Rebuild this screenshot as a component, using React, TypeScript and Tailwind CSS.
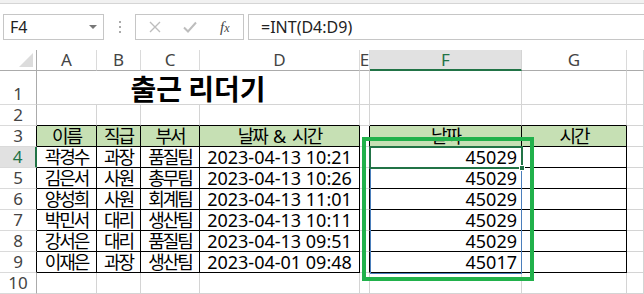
import clsx from "clsx";

const COLS = ["A", "B", "C", "D", "E", "F", "G", ""];

const DATA: string[][] = [
	["곽경수", "과장", "품질팀", "2023-04-13 10:21", "45029"],
	["김은서", "사원", "총무팀", "2023-04-13 10:26", "45029"],
	["양성희", "사원", "회계팀", "2023-04-13 11:01", "45029"],
	["박민서", "대리", "생산팀", "2023-04-13 10:11", "45029"],
	["강서은", "대리", "품질팀", "2023-04-13 09:51", "45029"],
	["이재은", "과장", "생산팀", "2023-04-01 09:48", "45017"],
];

const HEADS = ["이름", "직급", "부서", "", "", "날짜", "시간", ""];

function inTable(r: number, c: number) {
	return r >= 3 && r <= 9 && (c <= 3 || c === 5 || c === 6);
}

function cellText(r: number, c: number): string {
	if (r === 3) return HEADS[c];
	if (r >= 4 && r <= 9) {
		const row = DATA[r - 4];
		if (c <= 3) return row[c];
		if (c === 5) return row[4];
	}
	return "";
}

function Cell({ r, c }: { r: number; c: number }) {
	const text = cellText(r, c);
	const right = c === 5 && r >= 4;
	const korean = r === 3 || c <= 2;
	return (
		<div
			className={clsx(
				"flex items-end border-r border-b pb-[1px] text-[18px] leading-[18px] text-black whitespace-nowrap",
				inTable(r, c) || inTable(r, c + 1) ? "border-r-black" : "border-r-[#d4d4d4]",
				inTable(r, c) || inTable(r + 1, c) ? "border-b-black" : "border-b-[#d4d4d4]",
				r === 3 && inTable(r, c) && "bg-[#c6e0b4]",
				right ? "justify-end pr-[4px]" : "justify-center",
				korean && "tracking-[-2px]",
			)}
		>
			{r === 3 && c === 3 ? (
				<>
					<span>날짜</span>
					<span className="mx-[6px] tracking-normal">&amp;</span>
					<span>시간</span>
				</>
			) : (
				text
			)}
		</div>
	);
}

function RowHead({ r }: { r: number }) {
	const active = r === 4;
	return (
		<div
			className={clsx(
				"flex items-end justify-center border-b border-b-[#dadada] pb-[1px] text-[17px] leading-[18px]",
				active ? "bg-[#e1e1e1] text-[#217346] border-r-2 border-r-[#217346]" : "text-[#444] border-r",
				!active && (inTable(r, 0) ? "border-r-black" : "border-r-[#ababab]"),
			)}
		>
			{r}
		</div>
	);
}

function Toolbar() {
	return (
		<div className="h-[50px] flex flex-col">
			<div className="h-[4px] bg-[#f1f1f1] border-b border-[#d5d5d5]" />
			<div className="mt-[10px] flex h-[26px] items-stretch">
				<div className="ml-[3px] w-[101px] border border-[#c6c6c6] flex items-center justify-between pl-[6px] pr-[6px]">
					<span className="text-[16px] text-[#222]">F4</span>
					<span className="w-0 h-0 border-l-[4px] border-r-[4px] border-t-[4px] border-l-transparent border-r-transparent border-t-[#777]" />
				</div>
				<div className="w-[31px] flex flex-col items-center justify-center gap-[3px]">
					<span className="w-[2px] h-[2px] bg-[#aaa]" />
					<span className="w-[2px] h-[2px] bg-[#aaa]" />
					<span className="w-[2px] h-[2px] bg-[#aaa]" />
				</div>
				<div className="w-[109px] border border-[#c6c6c6] flex items-center">
					<svg width="12" height="12" viewBox="0 0 12 12" className="ml-[13px]">
						<path d="M1 1L11 11M11 1L1 11" stroke="#bdbdbd" strokeWidth="1.4" fill="none" />
					</svg>
					<svg width="14" height="12" viewBox="0 0 14 12" className="ml-[22px]">
						<path d="M1 6.5L5 10.5L13 1.5" stroke="#bdbdbd" strokeWidth="2" fill="none" />
					</svg>
					<span className="ml-[23px] font-['Liberation_Serif',serif] italic text-[15px] text-[#444]">
						f<span className="text-[12px]">x</span>
					</span>
				</div>
				<div className="ml-[4px] flex-1 border border-r-0 border-[#c6c6c6] flex items-center pl-[12px]">
					<span className="text-[16px] text-[#222]">=INT(D4:D9)</span>
				</div>
			</div>
		</div>
	);
}

export default function App() {
	const rows = [2, 3, 4, 5, 6, 7, 8, 9, 10];
	return (
		<div className="relative w-[644px] h-[294px] overflow-hidden bg-white font-['Noto_Sans','Noto_Sans_CJK_KR',sans-serif]">
			<Toolbar />
			<div className="grid grid-cols-[37px_60px_44px_59px_160px_10px_152px_105px_1fr] grid-rows-[21px_34px_21px_21px_21px_21px_21px_21px_21px_21px_21px]">
				<div className="relative border-r border-b border-[#ababab]">
					<div className="absolute right-[3px] bottom-[3px] w-[14px] h-[14px] bg-[#dcdcdc] [clip-path:polygon(100%_0,100%_100%,0_100%)]" />
				</div>
				{COLS.map((col, i) =>
					col === "F" ? (
						<div
							key={i}
							className="flex items-center justify-center bg-[#e1e1e1] border-r border-r-[#d4d4d4] border-b-2 border-b-[#217346] text-[17px] text-[#217346]"
						>
							{col}
						</div>
					) : (
						<div
							key={i}
							className="flex items-center justify-center border-r border-r-[#dadada] border-b border-b-[#ababab] text-[17px] text-[#444]"
						>
							{col}
						</div>
					),
				)}

				<RowHead r={1} />
				<div className="col-span-4 flex items-end justify-center border-r border-b border-[#d4d4d4] pb-[1px] font-['Noto_Sans_CJK_KR',sans-serif] font-bold text-[28px] leading-[29px] text-black">
					출근 리더기
				</div>
				{[4, 5, 6, 7].map((c) => (
					<Cell key={c} r={1} c={c} />
				))}

				{rows.map((r) => (
					<div key={r} className="contents">
						<RowHead r={r} />
						{COLS.map((_, c) => (
							<Cell key={c} r={r} c={c} />
						))}
					</div>
				))}
			</div>

			{/* spill range F4:F9 */}
			<div className="absolute left-[370px] top-[146px] w-[152px] h-[128px] border border-[#4a7ebb]" />
			{/* active cell */}
			<div className="absolute left-[369px] top-[146px] w-[154px] h-[23px] border-2 border-[#217346]" />
			<div className="absolute left-[519px] top-[165px] w-[6px] h-[6px] bg-[#217346] border border-white" />
			{/* annotation box */}
			<div className="absolute left-[362px] top-[137px] w-[172px] h-[144px] border-4 border-[#21b14b]" />
		</div>
	);
}
